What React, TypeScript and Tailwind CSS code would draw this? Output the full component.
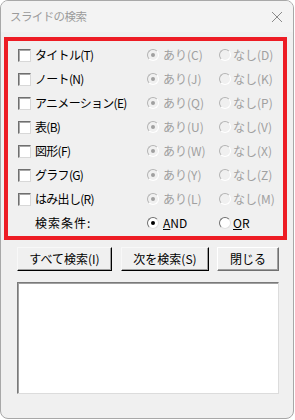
import React from 'react';

const font = { fontFamily: '"Noto Sans CJK JP", "Noto Sans", sans-serif' };

type Row = { label: string; on: string; off: string };

const rows: Row[] = [
  { label: 'タイトル(T)', on: 'あり(C)', off: 'なし(D)' },
  { label: 'ノート(N)', on: 'あり(J)', off: 'なし(K)' },
  { label: 'アニメーション(E)', on: 'あり(Q)', off: 'なし(P)' },
  { label: '表(B)', on: 'あり(U)', off: 'なし(V)' },
  { label: '図形(F)', on: 'あり(W)', off: 'なし(X)' },
  { label: 'グラフ(G)', on: 'あり(Y)', off: 'なし(Z)' },
  { label: 'はみ出し(R)', on: 'あり(L)', off: 'なし(M)' },
];

function Checkbox() {
  return (
    <span className="w-[13px] h-[13px] shrink-0 bg-white border border-t-[#6f6f6f] border-l-[#6f6f6f] border-b-[#d8d8d8] border-r-[#d8d8d8] shadow-[inset_1px_1px_0_#a8a8a8]" />
  );
}

function Radio({ checked, disabled }: { checked: boolean; disabled?: boolean }) {
  return (
    <span
      className={
        'w-[12px] h-[12px] shrink-0 rounded-full flex items-center justify-center border ' +
        (disabled
          ? 'bg-[#f0f0f0] border-t-[#b4b4b4] border-l-[#b4b4b4] border-b-white border-r-white'
          : 'bg-white border-t-[#6f6f6f] border-l-[#6f6f6f] border-b-[#e0e0e0] border-r-[#e0e0e0]')
      }
    >
      {checked && (
        <span className={'w-[4px] h-[4px] rounded-full ' + (disabled ? 'bg-[#a0a0a0]' : 'bg-black')} />
      )}
    </span>
  );
}

function Button({ label, dark }: { label: string; dark?: boolean }) {
  return (
    <button
      className={
        'w-full h-[24px] text-[12px] text-black bg-[#f0f0f0] flex items-center justify-center border ' +
        (dark
          ? 'border-t-[#f8f8f8] border-l-[#f8f8f8] border-b-black border-r-black shadow-[inset_-1px_-1px_0_#a0a0a0]'
          : 'border-t-white border-l-white border-b-[#707070] border-r-[#707070] shadow-[inset_-1px_-1px_0_#a0a0a0]')
      }
      style={font}
    >
      {label}
    </button>
  );
}

export default function App() {
  return (
    <div className="w-[295px] h-[420px] bg-white relative overflow-hidden" style={font}>
      <div className="w-[294px] h-[419px] border border-[#a8a8a8] rounded-lg overflow-hidden bg-[#f0f0f0] flex flex-col">
        {/* title bar */}
        <div className="h-[31px] bg-[#f3f3f3] flex items-center justify-between pl-[9px] pr-[9px]">
          <span className="text-[11.5px] text-[#9b9b9b] tracking-[-0.6px]">スライドの検索</span>
          <svg width="12" height="12" viewBox="0 0 12 12" className="mr-[1px]">
            <path d="M1 1 L11 11 M11 1 L1 11" stroke="#8a8a8a" strokeWidth="1" fill="none" />
          </svg>
        </div>

        {/* options */}
        <div className="ml-[3px] mt-[5px] w-[283px] h-[203px] border-4 border-[#ed1c24] pt-[2px]">
          {rows.map((r) => (
            <div key={r.label} className="h-[24px] flex items-center text-[12px]">
              <div className="w-[139px] pl-[10px] flex items-center gap-[4px] text-black">
                <Checkbox />
                <span className="tracking-[-0.7px] whitespace-nowrap">{r.label}</span>
              </div>
              <div className="w-[72px] flex items-center gap-[4px] text-[#a0a0a0]">
                <Radio checked disabled />
                <span>{r.on}</span>
              </div>
              <div className="flex items-center gap-[2px] text-[#a0a0a0]">
                <Radio checked={false} disabled />
                <span>{r.off}</span>
              </div>
            </div>
          ))}
          <div className="h-[24px] flex items-center text-[12px] text-black">
            <div className="w-[139px] pl-[27px]">
              <span className="tracking-[1px]">検索条件:</span>
            </div>
            <div className="w-[72px] flex items-center gap-[4px]">
              <Radio checked />
              <span>
                <span className="underline">A</span>ND
              </span>
            </div>
            <div className="flex items-center gap-[2px]">
              <Radio checked={false} />
              <span>
                <span className="underline">O</span>R
              </span>
            </div>
          </div>
        </div>

        {/* buttons */}
        <div className="mt-[7px] ml-[16px] flex gap-[9px]">
          <div className="w-[95px]">
            <Button label="すべて検索(I)" dark />
          </div>
          <div className="w-[88px]">
            <Button label="次を検索(S)" dark />
          </div>
          <div className="w-[62px] ml-[-1px]">
            <Button label="閉じる" />
          </div>
        </div>

        {/* result list */}
        <div className="mt-[11px] ml-[16px] w-[262px] h-[112px] bg-white border border-t-[#7a7a7a] border-l-[#7a7a7a] border-b-[#dcdcdc] border-r-[#dcdcdc] shadow-[inset_1px_1px_0_#a0a0a0]" />
      </div>
    </div>
  );
}
